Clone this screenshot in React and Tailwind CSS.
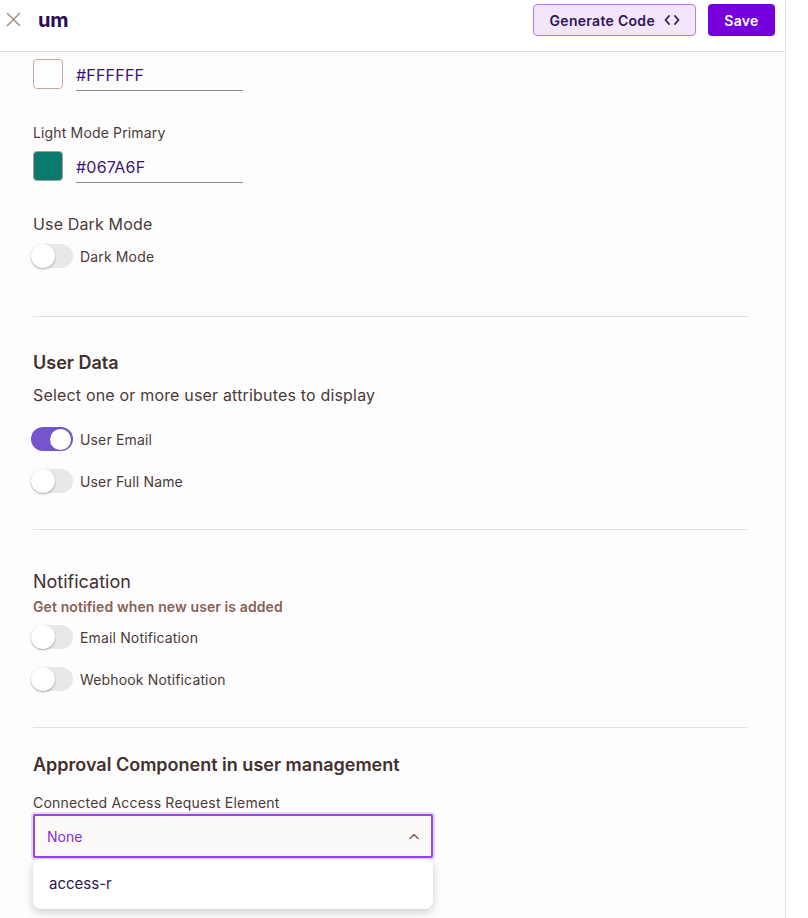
import React from "react";

function Toggle({ on, label }) {
  return (
    <div className="flex items-center h-[24px]">
      {on ? (
        <div className="w-[42px] h-[24px] rounded-full bg-[#7454cf] flex items-center justify-end pr-[2px] ml-[-2px]">
          <div className="w-[21px] h-[21px] rounded-full bg-white" />
        </div>
      ) : (
        <div className="relative w-[42px] h-[24px] rounded-full bg-[#e9e7e7] ml-[-2px]">
          <div className="absolute left-0 top-0 w-[24px] h-[24px] rounded-full bg-white shadow-[0_1px_2px_rgba(0,0,0,0.35)]" />
        </div>
      )}
      <span className="ml-[7px] text-[14px] tracking-[0.15px] text-[#4a3a38]">{label}</span>
    </div>
  );
}

function ColorRow({ swatch, value, border }) {
  return (
    <div className="flex items-start gap-[13px]">
      <div className={`w-[30px] h-[30px] rounded-[4px] border ${border}`} style={{ background: swatch }} />
      <div className="w-[167px] h-[32px] border-b border-[#8f8a8a] flex items-center text-[16px] text-[#3b1670] tracking-[0.2px]">
        {value}
      </div>
    </div>
  );
}

export default function App() {
  return (
    <div className="flex min-h-[918px] bg-white" style={{ fontFamily: "Inter, 'Noto Sans', sans-serif" }}>
      <div className="w-[786px] border-r border-[#e6ddd8] bg-[#fefdfd]">
        <div className="h-[52px] border-b border-[#e6ddd8] flex items-start pt-[4px] bg-white">
          <div className="w-[31px] h-[31px] flex items-center justify-center ml-[-2px]">
            <svg width="15" height="15" viewBox="0 0 15 15" fill="none" stroke="#a58e86" strokeWidth="1.5" strokeLinecap="round">
              <path d="M1.5 1.5 L13.5 13.5 M13.5 1.5 L1.5 13.5" />
            </svg>
          </div>
          <div className="ml-[9px] h-[31px] flex items-center text-[20px] font-bold text-[#2b0b57] tracking-[-0.1px]">um</div>
          <div className="flex-1" />
          <button className="h-[32px] pl-[16px] pr-[15px] rounded-[4px] border border-[#b67ce8] bg-[#f3e6fb] flex items-center gap-[9px] text-[14px] font-semibold text-[#2f1652] tracking-[0.3px]">
            Generate Code
            <svg width="16" height="12" viewBox="0 0 16 12" fill="none" stroke="#2f1652" strokeWidth="1.8" strokeLinecap="round" strokeLinejoin="round">
              <path d="M5 2 L1.5 6 L5 10 M11 2 L14.5 6 L11 10" />
            </svg>
          </button>
          <button className="ml-[12px] mr-[10px] h-[32px] w-[67px] rounded-[4px] bg-[#7600dd] text-white text-[14px] font-semibold tracking-[0.3px]">
            Save
          </button>
        </div>

        <div className="pl-[33px] pr-[38px]">
          <div className="pt-[7px]">
            <ColorRow swatch="#ffffff" value="#FFFFFF" border="border-[#c5aba2]" />
          </div>
          <div className="mt-[33px] text-[14px] leading-[18px] tracking-[0.15px] text-[#4a3a38]">Light Mode Primary</div>
          <div className="mt-[9px]">
            <ColorRow swatch="#0a7a6f" value="#067A6F" border="border-[#b49a90]" />
          </div>
          <div className="mt-[30px] text-[16px] leading-[22px] tracking-[0.15px] text-[#4a3a38]">Use Dark Mode</div>
          <div className="mt-[9px]">
            <Toggle on={false} label="Dark Mode" />
          </div>

          <div className="mt-[48px] border-t border-[#e2dfdf]" />

          <div className="mt-[34px] text-[18px] leading-[24px] font-semibold text-[#42302e]">User Data</div>
          <div className="mt-[9px] text-[16px] leading-[22px] tracking-[0.18px] text-[#4a3a38]">Select one or more user attributes to display</div>
          <div className="mt-[21px]">
            <Toggle on={true} label="User Email" />
          </div>
          <div className="mt-[18px]">
            <Toggle on={false} label="User Full Name" />
          </div>

          <div className="mt-[36px] border-t border-[#e2dfdf]" />

          <div className="mt-[40px] text-[18px] leading-[24px] text-[#42302e]">Notification</div>
          <div className="mt-[4px] text-[14px] leading-[18px] font-semibold tracking-[0.1px] text-[#8a5f55]">Get notified when new user is added</div>
          <div className="mt-[9px]">
            <Toggle on={false} label="Email Notification" />
          </div>
          <div className="mt-[18px]">
            <Toggle on={false} label="Webhook Notification" />
          </div>

          <div className="mt-[36px] border-t border-[#e2dfdf]" />

          <div className="mt-[25px] text-[18px] leading-[24px] font-semibold text-[#42302e]">Approval Component in user management</div>
          <div className="mt-[16px] text-[14px] leading-[20px] tracking-[0.2px] text-[#4a3a38]">Connected Access Request Element</div>
          <div className="relative w-[400px] mt-[1px]">
            <div className="h-[44px] border-2 border-[#9a44ef] rounded-[2px] bg-[#fcfaf8] shadow-[0_0_0_2px_rgba(155,68,239,0.2)] flex items-center pl-[12px] pr-[12px]">
              <span className="text-[14px] text-[#8a2ce0] flex-1">None</span>
              <svg width="10" height="7" viewBox="0 0 10 7" fill="none" stroke="#7a5b52" strokeWidth="1.5" strokeLinecap="round" strokeLinejoin="round">
                <path d="M1 5.5 L5 1.5 L9 5.5" />
              </svg>
            </div>
            <div className="absolute left-0 right-0 top-[45px] h-[50px] bg-white rounded-[8px] shadow-[0_3px_10px_rgba(0,0,0,0.2)] flex items-center pl-[16px] text-[15px] text-[#2f1652]">
              access-r
            </div>
          </div>
        </div>
      </div>
    </div>
  );
}
